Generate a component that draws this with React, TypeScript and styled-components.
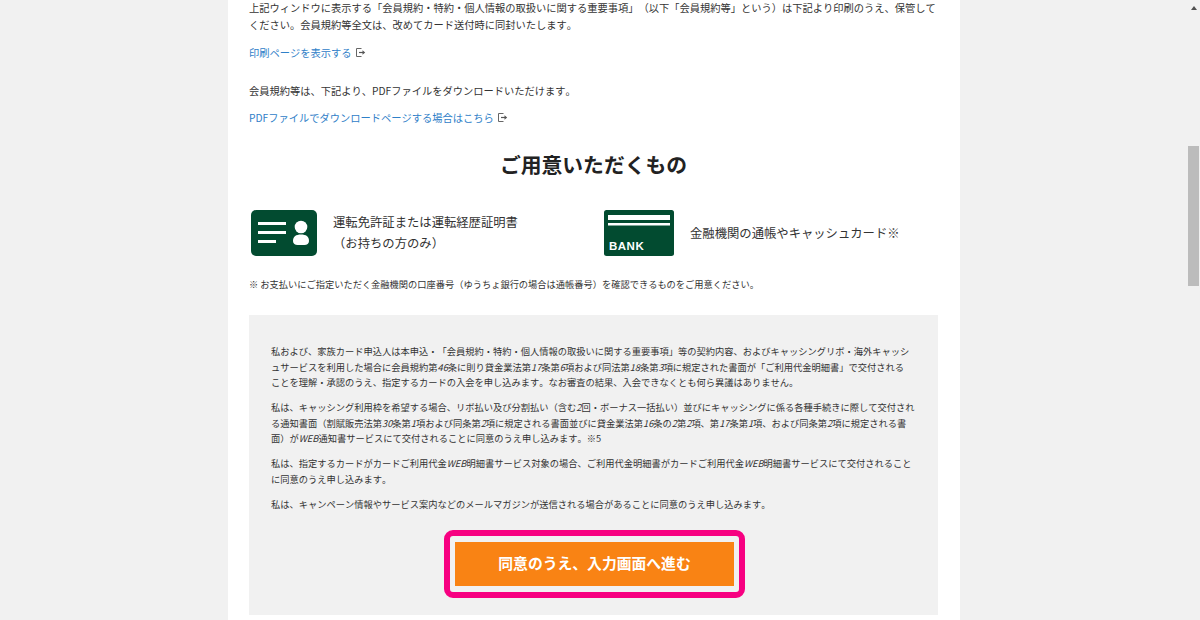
import React from 'react';
import styled, { createGlobalStyle } from 'styled-components';

const GlobalStyle = createGlobalStyle`
  html, body {
    margin: 0;
    padding: 0;
    background: #f1f1f1;
    overflow: hidden;
  }
  body {
    font-family: "Noto Sans CJK JP", "Noto Sans", sans-serif;
    color: #333;
    text-spacing-trim: space-all;
    font-kerning: none;
  }
`;

const Page = styled.div`
  display: flex;
  height: 620px;
  overflow: hidden;
`;

const Stage = styled.div`
  flex: 1;
  display: flex;
  justify-content: center;
`;

const Sheet = styled.main`
  width: 732px;
  height: 620px;
  box-sizing: border-box;
  background: #fff;
  padding: 0 22px 0 21px;
  overflow: hidden;
`;

const Text = styled.p<{ $top?: number }>`
  margin: ${props => props.$top ?? 0}px 0 0;
  font-size: 10.25px;
  line-height: 17px;
  white-space: nowrap;
`;

const LinkRow = styled.a<{ $top: number }>`
  display: flex;
  align-items: center;
  gap: 3px;
  margin-top: ${props => props.$top}px;
  height: 17px;
  font-size: 10.25px;
  color: #2f80c8;
  text-decoration: none;
`;

const Heading = styled.h2`
  margin: 17px 0 0;
  height: 42px;
  font-size: 20.8px;
  line-height: 42px;
  font-weight: 700;
  text-align: center;
  color: #222;
`;

const Items = styled.div`
  display: flex;
  margin-top: 25px;
  padding-left: 2px;
`;

const Item = styled.div<{ $width: number }>`
  display: flex;
  align-items: center;
  width: ${props => props.$width}px;
  height: 46px;
`;

const ItemLabel = styled.div`
  margin-left: 16px;
  font-size: 12.33px;
  line-height: 21px;
  color: #333;
  white-space: nowrap;
`;

const Note = styled.p`
  margin: 21px 0 0;
  font-size: 9.24px;
  line-height: 15px;
  color: #333;
  white-space: nowrap;
`;

const Panel = styled.section`
  margin-top: 23px;
  height: 300px;
  box-sizing: border-box;
  background: #f1f1f1;
  padding: 29px 22px 0;
`;

const Terms = styled.p`
  margin: 0 0 9.5px;
  font-size: 9.25px;
  line-height: 15.5px;
  color: #333;
  white-space: nowrap;

  em {
    font-style: italic;
  }
`;

const Highlight = styled.div`
  width: 301px;
  height: 68px;
  box-sizing: border-box;
  margin: 18px 0 0 173px;
  border: 6px solid #f70081;
  border-radius: 9px;
  padding: 6px 5px;
`;

const Submit = styled.button`
  display: block;
  width: 100%;
  height: 100%;
  border: 0;
  padding: 0 0 4px;
  background: #f98314;
  color: #fff;
  font-family: inherit;
  font-size: 14.8px;
  font-weight: 700;
`;

const ScrollTrack = styled.div`
  width: 12px;
  flex: none;
  background: #f1f1f1;
`;

const ScrollArrow = styled.div`
  width: 0;
  height: 0;
  margin: 6px auto 0;
  border-left: 3px solid transparent;
  border-right: 3px solid transparent;
  border-bottom: 4px solid #505050;
`;

const ScrollThumb = styled.div`
  width: 11px;
  height: 140px;
  margin-top: 136px;
  background: #bcbcbc;
`;

const ExternalIcon = () => (
  <svg width="11" height="11" viewBox="0 0 11 11" fill="none">
    <path d="M6.5 1.5H1.5V9.5H6.5" stroke="#666" strokeWidth="1" />
    <path d="M4 5.5H8" stroke="#555" strokeWidth="1.2" />
    <path d="M7.5 3.2L10.2 5.5L7.5 7.8Z" fill="#555" />
  </svg>
);

const LicenseIcon = () => (
  <svg width="66" height="46" viewBox="0 0 66 46">
    <rect width="66" height="46" rx="5" fill="#024b30" />
    <rect x="7" y="12" width="28" height="3" fill="#fff" />
    <rect x="7" y="21" width="28" height="3" fill="#fff" />
    <rect x="7" y="30" width="18" height="3" fill="#fff" />
    <circle cx="50" cy="17" r="6.3" fill="#fff" />
    <path d="M42 31C42 26.5 45 24.5 50 24.5C55 24.5 58 26.5 58 31C58 33.5 56 35 53.5 35H46.5C44 35 42 33.5 42 31Z" fill="#fff" />
  </svg>
);

const BankIcon = () => (
  <svg width="70" height="46" viewBox="0 0 70 46">
    <rect width="70" height="46" rx="2.5" fill="#024b30" />
    <rect x="4" y="5" width="62" height="5" fill="#fff" />
    <rect x="4" y="13" width="62" height="2.5" fill="#fff" />
    <text x="5" y="40" fill="#fff" fontFamily="Liberation Sans, sans-serif" fontSize="11.5" fontWeight="700" letterSpacing="0.5">BANK</text>
  </svg>
);

export default function App() {
  return (
    <Page>
      <GlobalStyle />
      <Stage>
        <Sheet>
          <Text $top={-1}>
            上記ウィンドウに表示する「会員規約・特約・個人情報の取扱いに関する重要事項」（以下「会員規約等」という）は下記より印刷のうえ、保管して
            <br />
            ください。会員規約等全文は、改めてカード送付時に同封いたします。
          </Text>
          <LinkRow href="#" $top={11}>
            印刷ページを表示する <ExternalIcon />
          </LinkRow>
          <Text $top={21}>会員規約等は、下記より、PDFファイルをダウンロードいただけます。</Text>
          <LinkRow href="#" $top={10}>
            PDFファイルでダウンロードページする場合はこちら <ExternalIcon />
          </LinkRow>
          <Heading>ご用意いただくもの</Heading>
          <Items>
            <Item $width={353}>
              <LicenseIcon />
              <ItemLabel>
                運転免許証または運転経歴証明書
                <br />
                （お持ちの方のみ）
              </ItemLabel>
            </Item>
            <Item $width={330}>
              <BankIcon />
              <ItemLabel>金融機関の通帳やキャッシュカード※</ItemLabel>
            </Item>
          </Items>
          <Note>※ お支払いにご指定いただく金融機関の口座番号（ゆうちょ銀行の場合は通帳番号）を確認できるものをご用意ください。</Note>
          <Panel>
            <Terms>
              私および、家族カード申込人は本申込・「会員規約・特約・個人情報の取扱いに関する重要事項」等の契約内容、およびキャッシングリボ・海外キャッシ
              <br />
              ュサービスを利用した場合に会員規約第<em>46</em>条に則り貸金業法第<em>17</em>条第<em>6</em>項および同法第<em>18</em>条第<em>3</em>項に規定された書面が「ご利用代金明細書」で交付される
              <br />
              ことを理解・承認のうえ、指定するカードの入会を申し込みます。なお審査の結果、入会できなくとも何ら異議はありません。
            </Terms>
            <Terms>
              私は、キャッシング利用枠を希望する場合、リボ払い及び分割払い（含む<em>2</em>回・ボーナス一括払い）並びにキャッシングに係る各種手続きに際して交付され
              <br />
              る通知書面（割賦販売法第<em>30</em>条第<em>1</em>項および同条第<em>2</em>項に規定される書面並びに貸金業法第<em>16</em>条の<em>2</em>第<em>2</em>項、第<em>17</em>条第<em>1</em>項、および同条第<em>2</em>項に規定される書
              <br />
              面）が<em>WEB</em>通知書サービスにて交付されることに同意のうえ申し込みます。※5
            </Terms>
            <Terms>
              私は、指定するカードがカードご利用代金<em>WEB</em>明細書サービス対象の場合、ご利用代金明細書がカードご利用代金<em>WEB</em>明細書サービスにて交付されること
              <br />
              に同意のうえ申し込みます。
            </Terms>
            <Terms>私は、キャンペーン情報やサービス案内などのメールマガジンが送信される場合があることに同意のうえ申し込みます。</Terms>
            <Highlight>
              <Submit type="button">同意のうえ、入力画面へ進む</Submit>
            </Highlight>
          </Panel>
        </Sheet>
      </Stage>
      <ScrollTrack>
        <ScrollArrow />
        <ScrollThumb />
      </ScrollTrack>
    </Page>
  );
}
